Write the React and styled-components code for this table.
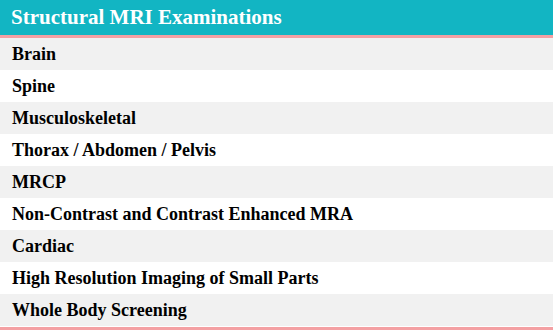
import React from 'react'
import styled, { createGlobalStyle } from 'styled-components'

const exams = [
  'Brain',
  'Spine',
  'Musculoskeletal',
  'Thorax / Abdomen / Pelvis',
  'MRCP',
  'Non-Contrast and Contrast Enhanced MRA',
  'Cardiac',
  'High Resolution Imaging of Small Parts',
  'Whole Body Screening',
]

const App = () => {
  return (
    <>
      <GlobalStyle />
      <Table>
        <Header>Structural MRI Examinations</Header>
        <Body>
          {exams.map((name, index) => (
            <Row key={name} $shaded={index % 2 === 0}>
              {name}
            </Row>
          ))}
        </Body>
      </Table>
    </>
  )
}

const GlobalStyle = createGlobalStyle`
  body {
    margin: 0;
    background: #fff;
  }
`

const Table = styled.div`
  width: 553px;
  display: flex;
  flex-direction: column;
  font-family: "Liberation Serif", "Times New Roman", serif;
  font-weight: bold;
`

const Header = styled.div`
  height: 35px;
  display: flex;
  align-items: center;
  padding-left: 11px;
  background: #12b5c3;
  color: #fff;
  font-size: 21px;
  border-bottom: 3px solid #f4a0a3;
`

const Body = styled.div`
  display: flex;
  flex-direction: column;
  padding-bottom: 1px;
  border-bottom: 3px solid #f4a0a3;
`

const Row = styled.div`
  height: 32px;
  display: flex;
  align-items: center;
  padding-left: 12px;
  background: ${(p) => (p.$shaded ? '#f1f1f1' : '#fff')};
  color: #000;
  font-size: 18px;
`

export default App
